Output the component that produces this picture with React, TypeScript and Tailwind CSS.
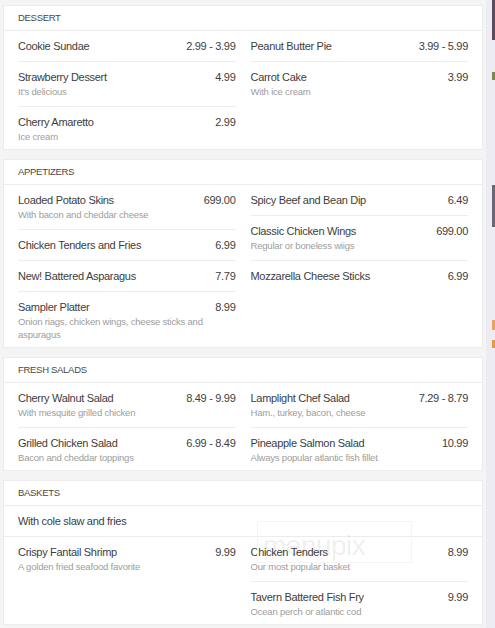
import React from "react";

type Item = { name: string; price: string; desc?: string };
type Section = { title: string; note?: string; left: Item[]; right: Item[] };

const sections: Section[] = [
  {
    title: "DESSERT",
    left: [
      { name: "Cookie Sundae", price: "2.99 - 3.99" },
      { name: "Strawberry Dessert", price: "4.99", desc: "It's delicious" },
      { name: "Cherry Amaretto", price: "2.99", desc: "Ice cream" },
    ],
    right: [
      { name: "Peanut Butter Pie", price: "3.99 - 5.99" },
      { name: "Carrot Cake", price: "3.99", desc: "With ice cream" },
    ],
  },
  {
    title: "APPETIZERS",
    left: [
      { name: "Loaded Potato Skins", price: "699.00", desc: "With bacon and cheddar cheese" },
      { name: "Chicken Tenders and Fries", price: "6.99" },
      { name: "New! Battered Asparagus", price: "7.79" },
      { name: "Sampler Platter", price: "8.99", desc: "Onion riags, chicken wings, cheese sticks and aspuragus" },
    ],
    right: [
      { name: "Spicy Beef and Bean Dip", price: "6.49" },
      { name: "Classic Chicken Wings", price: "699.00", desc: "Regular or boneless wiigs" },
      { name: "Mozzarella Cheese Sticks", price: "6.99" },
    ],
  },
  {
    title: "FRESH SALADS",
    left: [
      { name: "Cherry Walnut Salad", price: "8.49 - 9.99", desc: "With mesquite grilled chicken" },
      { name: "Grilled Chicken Salad", price: "6.99 - 8.49", desc: "Bacon and cheddar toppings" },
    ],
    right: [
      { name: "Lamplight Chef Salad", price: "7.29 - 8.79", desc: "Ham., turkey, bacon, cheese" },
      { name: "Pineapple Salmon Salad", price: "10.99", desc: "Always popular atlantic fish fillet" },
    ],
  },
  {
    title: "BASKETS",
    note: "With cole slaw and fries",
    left: [{ name: "Crispy Fantail Shrimp", price: "9.99", desc: "A golden fried seafood favorite" }],
    right: [
      { name: "Chicken Tenders", price: "8.99", desc: "Our most popular basket" },
      { name: "Tavern Battered Fish Fry", price: "9.99", desc: "Ocean perch or atlantic cod" },
    ],
  },
];

function MenuItem({ item }: { item: Item }) {
  return (
    <div className="border-t border-[#ededed] first:border-t-0 pt-[9px] pb-[8px] last:pb-[6px]">
      <div className="flex justify-between gap-2 text-[11px] leading-[13px] tracking-[-0.3px] text-[#3d3d3d]">
        <span>{item.name}</span>
        <span className="shrink-0">{item.price}</span>
      </div>
      {item.desc && (
        <p className="mt-[1px] pr-3 text-[9.5px] leading-[13px] tracking-[-0.2px] text-[#9d9d9d]">{item.desc}</p>
      )}
    </div>
  );
}

function MenuCard({ section }: { section: Section }) {
  return (
    <div className="bg-white border border-[#ececec]">
      <div className="h-[25px] flex items-center px-[14px] border-b border-[#ececec] text-[9.5px] tracking-[-0.3px] text-[#474747]">
        {section.title}
      </div>
      {section.note && (
        <div className="h-[31px] flex items-center px-[14px] border-b border-[#ececec] text-[11px] tracking-[-0.3px] text-[#3d3d3d]">
          {section.note}
        </div>
      )}
      <div className="grid grid-cols-2 gap-x-[15px] px-[14px]">
        <div>
          {section.left.map((it) => (
            <MenuItem key={it.name} item={it} />
          ))}
        </div>
        <div>
          {section.right.map((it) => (
            <MenuItem key={it.name} item={it} />
          ))}
        </div>
      </div>
    </div>
  );
}

export default function App() {
  return (
    <div className="w-[495px] h-[628px] overflow-hidden flex bg-[#f4f4f5] font-['Liberation_Sans',Arial,sans-serif]">
      <div className="relative w-[480px] ml-[3px] pt-[5px] flex flex-col gap-[9px] shrink-0">
        {sections.map((s) => (
          <MenuCard key={s.title} section={s} />
        ))}
        {/* watermark */}
        <div className="absolute left-[254px] top-[521px] w-[155px] h-[42px] border border-[#f4f4f4] flex items-end pl-[5px] pb-[2px] text-[28px] leading-none tracking-[-0.5px] text-black/[0.08] select-none pointer-events-none">
          menupix
        </div>
      </div>
      {/* cut-off sidebar on the right */}
      <div className="ml-[3px] flex-1 bg-[#ececf2] flex justify-end">
        <div className="w-[3px] flex flex-col">
          <div className="h-[40px] bg-[#5a4a5e]" />
          <div className="h-[32px]" />
          <div className="h-[8px] bg-[#7b8a4a]" />
          <div className="h-[105px]" />
          <div className="h-[42px] bg-[#6d6676]" />
          <div className="h-[93px]" />
          <div className="h-[10px] bg-[#e9a35a]" />
          <div className="h-[10px]" />
          <div className="h-[8px] bg-[#e69845]" />
        </div>
      </div>
    </div>
  );
}
